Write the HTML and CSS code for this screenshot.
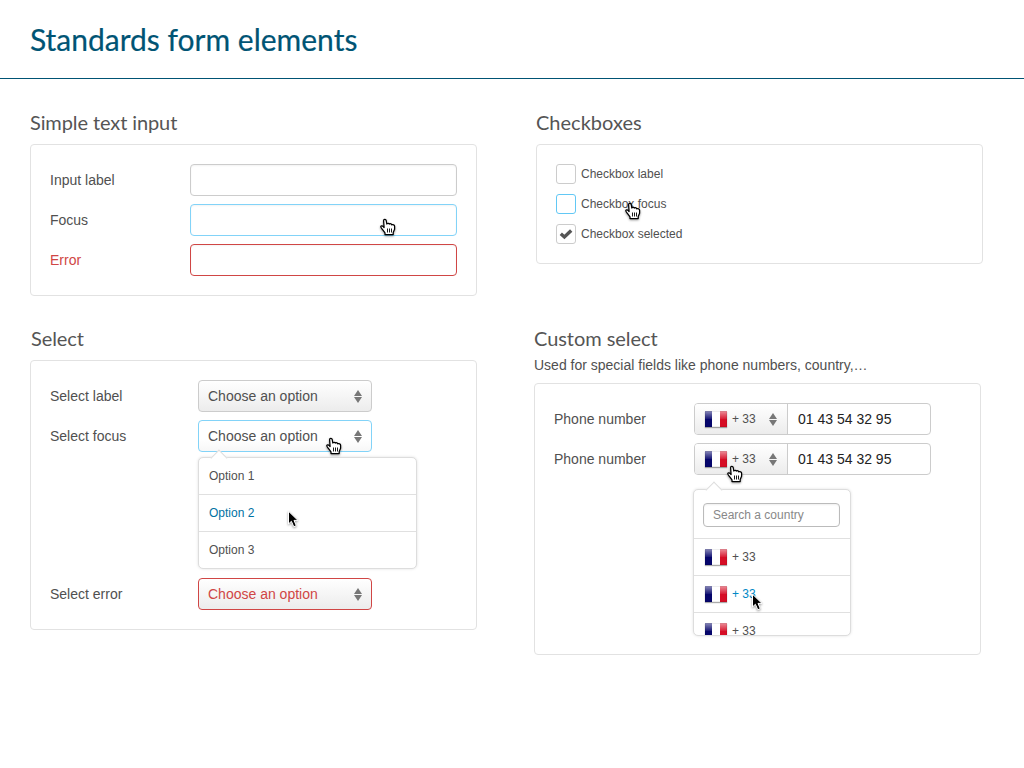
FILE: index.html
```html
<!DOCTYPE html>
<html lang="en">
<head>
<meta charset="utf-8">
<title>Standards form elements</title>
<link rel="stylesheet" href="styles.css">
</head>
<body>
<svg class="defs" aria-hidden="true">
  <defs>
    <symbol id="hand" viewBox="0 0 16 18">
      <path d="M5 16.5V14.8L2.6 11.6C1.7 10.4 .6 9.4 .8 8.5C1.2 7.4 2.8 7.8 4.1 9.6L3.6 2.8C3.5 1 5.8 .7 6.2 2.5L6.8 6C7.6 4.9 9 5.1 9.3 6.1C10.2 5.4 11.6 5.7 11.8 6.8C12.9 6.3 14.6 6.9 14.6 8.3V11.3L13.2 14.4V16.5Z" fill="#fff" stroke="#000" stroke-width="1.25" stroke-linejoin="round"/>
      <path d="M7.5 10.5v4M9.5 10.5v4M11.5 10.5v4" stroke="#000" stroke-width=".9"/>
    </symbol>
    <symbol id="arrow" viewBox="0 0 13 19">
      <path d="M1.5 1.2V14L4.4 11.3 6.8 16.8 9.3 15.6 7 10.4H11Z" fill="#000" stroke="#fff" stroke-width="1" stroke-linejoin="round"/>
    </symbol>
    <symbol id="sort" viewBox="0 0 8 13">
      <path d="M0 6 4 0 8 6ZM0 7H8L4 13Z" fill="#777"/>
    </symbol>
  </defs>
</svg>
<header class="header"><h1 class="title">Standards form elements</h1></header>
<main class="columns">
  <div class="column">
    <section class="section inputs">
      <h2 class="heading inputs-heading">Simple text input</h2>
      <div class="panel">
        <div class="row"><span class="label">Input label</span><div class="input"></div></div>
        <div class="row"><span class="label">Focus</span><div class="input focus"><svg class="cursor hand hand-input"><use href="#hand"/></svg></div></div>
        <div class="row"><span class="label danger">Error</span><div class="input error"></div></div>
      </div>
    </section>
    <section class="section selects">
      <h2 class="heading select-heading">Select</h2>
      <div class="panel">
        <div class="row"><span class="label wide">Select label</span><div class="select"><span>Choose an option</span><svg class="sort"><use href="#sort"/></svg></div></div>
        <div class="row"><span class="label wide">Select focus</span><div class="select focus"><span>Choose an option</span><svg class="sort"><use href="#sort"/></svg><svg class="cursor hand hand-select"><use href="#hand"/></svg></div></div>
        <div class="menu options">
          <div class="option">Option 1</div>
          <div class="option active">Option 2<svg class="cursor arrow arrow-option"><use href="#arrow"/></svg></div>
          <div class="option">Option 3</div>
        </div>
        <div class="row"><span class="label wide">Select error</span><div class="select error danger"><span>Choose an option</span><svg class="sort"><use href="#sort"/></svg></div></div>
      </div>
    </section>
  </div>
  <div class="column right">
    <section class="section checks">
      <h2 class="heading">Checkboxes</h2>
      <div class="panel check-panel">
        <div class="check"><span class="box"></span><span class="check-label">Checkbox label</span></div>
        <div class="check"><span class="box focus"></span><span class="check-label">Checkbox focus<svg class="cursor hand hand-check"><use href="#hand"/></svg></span></div>
        <div class="check"><span class="box"><svg class="tick" viewBox="0 0 14 12"><path d="M1.8 5.8 5.4 9 12.2 2.6" fill="none" stroke="#555" stroke-width="3.4"/></svg></span><span class="check-label">Checkbox selected</span></div>
      </div>
    </section>
    <section class="section custom">
      <h2 class="heading custom-heading">Custom select</h2>
      <p class="note">Used for special fields like phone numbers, country,…</p>
      <div class="panel custom-panel">
        <div class="row"><span class="label">Phone number</span><div class="phone"><div class="prefix"><i class="flag"></i><span>+ 33</span><svg class="sort"><use href="#sort"/></svg></div><span class="number">01 43 54 32 95</span></div></div>
        <div class="row"><span class="label">Phone number</span><div class="phone"><div class="prefix"><i class="flag"></i><span>+ 33</span><svg class="sort"><use href="#sort"/></svg><svg class="cursor hand hand-phone"><use href="#hand"/></svg></div><span class="number">01 43 54 32 95</span></div></div>
        <div class="menu countries">
          <div class="country-list">
            <div class="search-row"><div class="search">Search a country</div></div>
            <div class="country"><i class="flag"></i>+ 33</div>
            <div class="country active"><i class="flag"></i>+ 33<svg class="cursor arrow arrow-country"><use href="#arrow"/></svg></div>
            <div class="country"><i class="flag"></i>+ 33</div>
          </div>
        </div>
      </div>
    </section>
  </div>
</main>
</body>
</html>
```
FILE: styles.css
```css
* { box-sizing: border-box; }
body { margin: 0; height: 768px; overflow: hidden; background: #fff; color: #505050; font: 14px/20px "Liberation Sans", Arial, sans-serif; }
.defs { position: absolute; width: 0; height: 0; }
.header { height: 79px; padding: 19px 30px; border-bottom: 1px solid #005474; }
.title { margin: 0; font: 400 30px/40px Lato, sans-serif; color: #005474; -webkit-text-stroke: .2px #005474; }
.columns { display: flex; gap: 57px; padding: 31px 0 0 30px; }
.column { width: 447px; display: flex; flex-direction: column; gap: 30px; }
.right { width: 449px; gap: 62px; }
.checks { padding-left: 2px; }
.heading { margin: 0 0 9px; font: 400 20px/25px Lato, sans-serif; color: #555; }
.inputs-heading { letter-spacing: -.1px; }
.select-heading { padding-left: 1px; letter-spacing: -.1px; }
.panel { width: 447px; padding: 19px; border: 1px solid #e2e2e2; border-radius: 4px; display: flex; flex-direction: column; gap: 8px; }
.row { display: flex; align-items: center; height: 32px; }
.label { width: 140px; }
.wide { width: 148px; }
.danger { color: #d04645; }
.input { position: relative; width: 267px; height: 32px; border: 1px solid #ccc; border-radius: 4px; box-shadow: inset 0 1px 2px #0000000d; }
.select { position: relative; width: 174px; height: 32px; padding: 0 9px; display: flex; align-items: center; justify-content: space-between; border: 1px solid #ccc; border-radius: 4px; background: linear-gradient(#fff, #ececec); }
.focus { border-color: #82d3f8; }
.select.focus { background: linear-gradient(#fff 60%, #f7f7f7); }
.error { border-color: #d04645; }
.sort { width: 8px; height: 13px; flex: none; }
.cursor { position: absolute; z-index: 5; overflow: visible; filter: drop-shadow(0 1px 1px #0006); }
.hand { width: 16px; height: 18px; }
.arrow { width: 13px; height: 19px; }
.hand-input { left: 189px; top: 13px; }
.hand-select { left: 127px; top: 16px; }
.hand-check { left: 44px; top: 8px; }
.hand-phone { left: 32px; top: 21px; }
.menu { position: relative; border: 1px solid #ddd; border-radius: 5px; background: #fff; box-shadow: 0 0 3px #0000001f; font-size: 12px; }
.menu::before { content: ""; position: absolute; left: 14px; top: -6px; width: 11px; height: 11px; background: #fff; border: solid #ddd; border-width: 1px 0 0 1px; transform: rotate(45deg); }
.options { width: 219px; height: 112px; margin: -3px 0 1px 148px; }
.option { position: relative; height: 37px; padding: 8px 10px; }
.option:first-child { height: 36px; }
.option + .option, .country { border-top: 1px solid #e0e0e0; }
.option.active { color: #0072a3; }
.arrow-option { left: 88px; top: 15px; }
.check-panel { gap: 10px; }
.check { display: flex; align-items: center; gap: 5px; height: 20px; font-size: 12px; }
.box { width: 20px; height: 20px; display: flex; align-items: center; justify-content: center; border: 1px solid #ccc; border-radius: 3px; }
.box.focus { border-color: #62c8f5; }
.tick { width: 14px; height: 12px; }
.check-label { position: relative; }
.custom-heading { margin-bottom: 4px; letter-spacing: -.05px; }
.note { margin: 0 0 8px; }
.custom-panel { height: 272px; }
.phone { width: 237px; height: 32px; display: flex; border: 1px solid #ccc; border-radius: 4px; }
.prefix { position: relative; width: 93px; display: flex; align-items: center; padding: 0 10px 0 9px; border-right: 1px solid #ccc; border-radius: 3px 0 0 3px; background: linear-gradient(#fff, #ececec); font-size: 12px; }
.prefix .sort { margin-left: auto; }
.number { padding: 5px 10px; color: #222; }
.flag { width: 22px; height: 16px; margin: 0 5px 0 1px; flex: none; background: linear-gradient(#fff8, #fff1 50%, transparent 50%), linear-gradient(90deg, #05056b 7px, #fff 7px 15px, #d60d25 15px); box-shadow: inset 0 0 0 1px #0001, 0 1px 1px #0005; }
.countries { width: 158px; height: 147px; margin: 6px 0 0 139px; }
.country-list { height: 145px; overflow: hidden; border-radius: 4px; }
.search-row { height: 48px; padding: 13px 9px 0; }
.search { width: 137px; height: 24px; padding: 0 9px; border: 1px solid #bbb; border-radius: 4px; line-height: 22px; color: #888; box-shadow: inset 0 1px 2px #0001; }
.country { position: relative; height: 37px; padding: 0 10px; display: flex; align-items: center; }
.country.active { color: #0088c6; }
.arrow-country { left: 57px; top: 17px; }
```
